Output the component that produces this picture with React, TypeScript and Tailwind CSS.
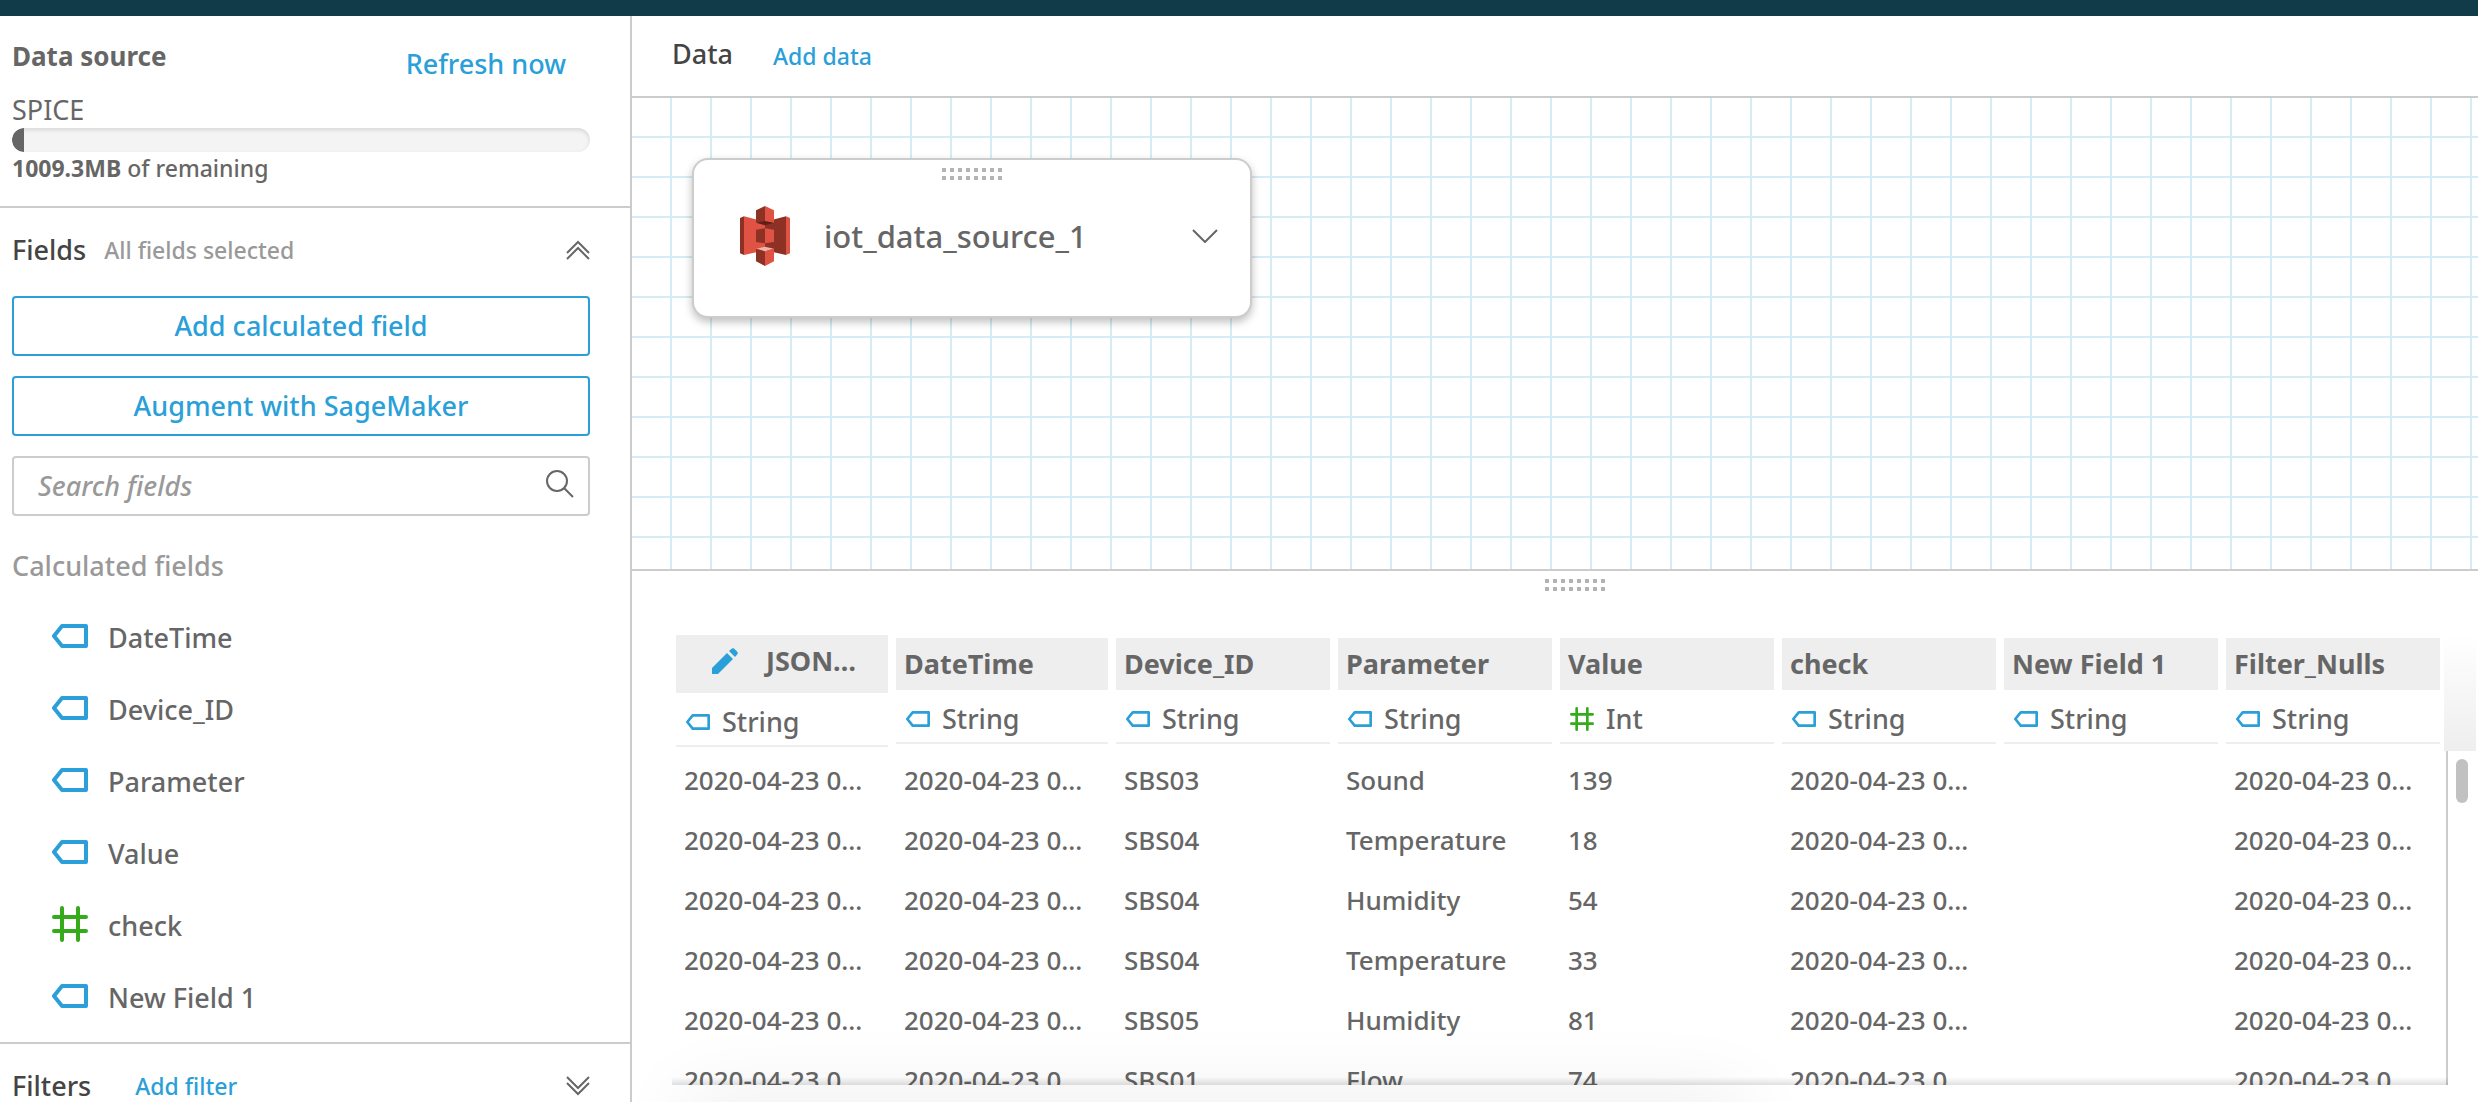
type Kind = 'String' | 'Int';

function TagIcon({ className, stroke }: { className: string; stroke: number }) {
  return (
    <svg className={className} viewBox="0 0 36 24" fill="none" stroke="#2a9fd8" strokeWidth={stroke} strokeLinejoin="round" aria-hidden="true">
      <path d="M10 2H34V22H10L2 12Z" />
    </svg>
  );
}

function HashIcon({ className }: { className: string }) {
  return (
    <svg className={className} viewBox="0 0 36 36" fill="none" stroke="#35ab1c" strokeWidth="4" strokeLinecap="round" aria-hidden="true">
      <path d="M10 2V34M26 2V34M2 11H34M2 25H34" />
    </svg>
  );
}

function DoubleChevron({ up }: { up?: boolean }) {
  return (
    <svg className="h-5 w-6" viewBox="0 0 24 20" fill="none" stroke="#666" strokeWidth="2" aria-hidden="true">
      {up ? <path d="M1 13L12 2L23 13M1 19L12 8L23 19" /> : <path d="M1 1L12 12L23 1M1 7L12 18L23 7" />}
    </svg>
  );
}

function Grip() {
  return (
    <svg className="h-3 w-[60px]" viewBox="0 0 60 12" fill="#b3b3b3" aria-hidden="true">
      {[0, 1, 2, 3, 4, 5, 6, 7].map((i) => (
        <g key={i}>
          <rect x={i * 8} y="0" width="4" height="4" />
          <rect x={i * 8} y="8" width="4" height="4" />
        </g>
      ))}
    </svg>
  );
}

function BucketIcon() {
  return (
    <svg className="h-[60px] w-[50px]" viewBox="57 54 150 180" aria-hidden="true">
      <path fill="#8c3123" d="M57 90L69 85V201L57 196Z" />
      <path fill="#e05243" d="M69 85L132 101V187L69 201Z" />
      <path fill="#8c3123" d="M195 85L132 101V187L195 201Z" />
      <path fill="#e05243" d="M195 85L207 90V196L195 201Z" />
      <path fill="#8c3123" d="M105 125L132 121V166L105 162Z" />
      <path fill="#e05243" d="M159 125L132 121V166L159 162Z" />
      <path fill="#5e1f18" d="M105 104L132 97L159 104L132 112Z" />
      <path fill="#8c3123" d="M105 67L132 54V99L105 104Z" />
      <path fill="#e05243" d="M132 54L159 67V104L132 99Z" />
      <path fill="#f2b0a9" d="M105 182L132 176L159 182L132 190Z" />
      <path fill="#8c3123" d="M105 182L132 190V234L105 220Z" />
      <path fill="#e05243" d="M159 182L132 190V234L159 220Z" />
    </svg>
  );
}

function PencilIcon() {
  return (
    <svg className="h-[26px] w-[26px]" viewBox="0 0 26 26" fill="#2a9fd8" aria-hidden="true">
      <path d="M0 26V20L15 5L21 11L6 26Z" />
      <path d="M17 3L20 0.500Q21 0 22 0.500L25.500 4Q26 5 25.500 6L23 9Z" />
    </svg>
  );
}

const fields: { name: string; kind: Kind }[] = [
  { name: 'DateTime', kind: 'String' },
  { name: 'Device_ID', kind: 'String' },
  { name: 'Parameter', kind: 'String' },
  { name: 'Value', kind: 'String' },
  { name: 'check', kind: 'Int' },
  { name: 'New Field 1', kind: 'String' },
];

const columns: { name: string; kind: Kind; editable?: boolean }[] = [
  { name: 'JSON…', kind: 'String', editable: true },
  { name: 'DateTime', kind: 'String' },
  { name: 'Device_ID', kind: 'String' },
  { name: 'Parameter', kind: 'String' },
  { name: 'Value', kind: 'Int' },
  { name: 'check', kind: 'String' },
  { name: 'New Field 1', kind: 'String' },
  { name: 'Filter_Nulls', kind: 'String' },
];

const stamp = '2020-04-23 0…';
const rows = [
  ['SBS03', 'Sound', '139'],
  ['SBS04', 'Temperature', '18'],
  ['SBS04', 'Humidity', '54'],
  ['SBS04', 'Temperature', '33'],
  ['SBS05', 'Humidity', '81'],
  ['SBS01', 'Flow', '74'],
].map(([device, parameter, value]) => [stamp, stamp, device, parameter, value, stamp, '', stamp]);

function Sidebar() {
  return (
    <aside className="flex w-[632px] shrink-0 flex-col border-r-2 border-[#ccc]">
      <section className="border-b-2 border-[#ccc] pt-6 pr-10 pb-[22px] pl-3">
        <div className="flex items-start justify-between">
          <h2 className="text-[26px] leading-8 font-bold">Data source</h2>
          <button type="button" className="mt-2 mr-6 text-[27px] leading-8 font-medium text-[#2a9fd8]">Refresh now</button>
        </div>
        <div className="mt-3 text-[27px] leading-9">SPICE</div>
        <div className="h-6 overflow-hidden rounded-full bg-[#f4f4f4] shadow-[inset_0_2px_4px_rgba(0,0,0,0.12)]">
          <div className="h-6 w-3 rounded-l-full rounded-r-sm bg-[#666]" />
        </div>
        <p className="text-[23px] leading-8 font-medium"><b>1009.3MB</b> of remaining</p>
      </section>

      <section className="border-b-2 border-[#ccc] pt-6 pr-10 pb-2 pl-3">
        <div className="flex items-center leading-9">
          <h2 className="text-[27px] font-medium text-[#444]">Fields</h2>
          <span className="ml-[18px] text-[23px] font-medium text-[#999]">All fields selected</span>
          <button type="button" aria-label="Collapse fields" className="ml-auto"><DoubleChevron up /></button>
        </div>
        <div className="mt-7 flex flex-col gap-5">
          <button type="button" className="h-[60px] rounded-sm border-2 border-[#2a9fd8] text-[27px] font-medium text-[#2a9fd8]">Add calculated field</button>
          <button type="button" className="h-[60px] rounded-sm border-2 border-[#2a9fd8] text-[27px] font-medium text-[#2a9fd8]">Augment with SageMaker</button>
          <label className="flex h-[60px] items-center rounded-sm border-2 border-[#ccc] pr-[14px] pl-6">
            <input type="search" aria-label="Search fields" placeholder="Search fields" className="min-w-0 flex-1 text-[27px] font-medium italic outline-none placeholder:text-[#999]" />
            <svg className="mb-1 h-7 w-7" viewBox="0 0 28 28" fill="none" stroke="#666" strokeWidth="2" aria-hidden="true">
              <circle cx="11" cy="11" r="10" />
              <path d="M18 18L27 27" />
            </svg>
          </label>
        </div>
        <h3 className="mt-8 text-[27px] leading-9 font-medium text-[#999]">Calculated fields</h3>
        <ul className="mt-[18px]">
          {fields.map((f) => (
            <li key={f.name} className="flex h-[72px] items-center pl-10 text-[27px] font-medium">
              {f.kind === 'Int' ? <HashIcon className="mb-1 h-9 w-9" /> : <TagIcon className="mb-1 h-6 w-9" stroke={4} />}
              <span className="ml-5">{f.name}</span>
            </li>
          ))}
        </ul>
      </section>

      <section className="flex items-center pt-6 pr-10 pl-3 leading-9">
        <h2 className="text-[27px] font-medium text-[#444]">Filters</h2>
        <button type="button" className="ml-11 text-[23px] font-medium text-[#2a9fd8]">Add filter</button>
        <button type="button" aria-label="Expand filters" className="ml-auto"><DoubleChevron /></button>
      </section>
    </aside>
  );
}

function Preview() {
  return (
    <section className="flex min-h-0 flex-1 flex-col pb-[17px] pl-10">
      <div className="flex justify-center pt-2 pb-11"><Grip /></div>
      <div className="relative flex min-h-0 flex-1 overflow-hidden pr-[2px]">
        <table className="w-full table-fixed self-start text-left">
          <colgroup>
            <col className="w-[220px]" />
            <col className="w-[220px]" />
            <col span={6} />
          </colgroup>
          <thead>
            <tr>
              {columns.map((c) => (
                <th key={c.name} scope="col" className="px-1 pb-[3px] align-middle">
                  {c.editable ? (
                    <div className="flex h-[58px] items-center bg-[#eee] pb-[6px] pl-9 text-[27px] font-bold">
                      <button type="button" aria-label="Edit column"><PencilIcon /></button>
                      <span className="ml-7">{c.name}</span>
                    </div>
                  ) : (
                    <div className="flex h-[52px] items-center bg-[#eee] px-2 text-[27px] font-bold">{c.name}</div>
                  )}
                  <div className="flex h-[54px] items-center border-b-2 border-[#eee] px-[10px] pt-[6px] text-[27px] font-medium">
                    {c.kind === 'Int' ? <HashIcon className="h-6 w-6" /> : <TagIcon className="h-4 w-6" stroke={4} />}
                    <span className="ml-3">{c.kind}</span>
                  </div>
                </th>
              ))}
            </tr>
          </thead>
          <tbody>
            {rows.map((r, i) => (
              <tr key={i} className="h-[60px]">
                {r.map((v, j) => (
                  <td key={j} className="px-3 text-[26px] font-medium whitespace-nowrap">{v}</td>
                ))}
              </tr>
            ))}
          </tbody>
        </table>
        <div className="flex w-8 shrink-0 flex-col">
          <div className="h-[116px] bg-linear-to-b from-white to-[#eee]" />
          <div className="ml-[2px] flex-1 border-l-2 border-[#ccc] pt-2 pl-2">
            <div className="h-11 w-3 rounded-full bg-[#c1c1c1]" />
          </div>
        </div>
        <div className="pointer-events-none absolute right-[30px] bottom-0 left-0 h-2 bg-linear-to-b from-transparent to-black/12" />
      </div>
    </section>
  );
}

export default function App() {
  return (
    <div className="relative flex h-screen flex-col overflow-hidden bg-white font-['Noto_Sans',sans-serif] text-[#666]">
      <header className="h-4 shrink-0 bg-[#123b4a]" />
      <div className="flex min-h-0 flex-1">
        <Sidebar />
        <main className="flex min-w-0 flex-1 flex-col">
          <div className="flex h-[82px] shrink-0 items-start border-b-2 border-[#ccc] pt-5 pl-10 leading-9">
            <h1 className="text-[27px] font-medium text-[#444]">Data</h1>
            <button type="button" className="mt-[2px] ml-10 text-[23px] font-medium text-[#2a9fd8]">Add data</button>
          </div>
          <div className="relative h-[473px] shrink-0 border-b-2 border-[#ccc] bg-[linear-gradient(to_right,transparent_38px,#d5ebf6_38px),linear-gradient(to_bottom,transparent_38px,#d5ebf6_38px)] bg-size-[40px_40px]">
            <div className="absolute top-[60px] left-[60px] flex h-40 w-[560px] flex-col rounded-2xl border-2 border-[#ccc] bg-white shadow-[0_4px_8px_rgba(0,0,0,0.25)]">
              <div className="flex justify-center pt-2"><Grip /></div>
              <div className="flex items-center pt-[26px] pr-8 pl-[46px]">
                <BucketIcon />
                <span className="ml-[34px] text-[31px] leading-10 font-medium">iot_data_source_1</span>
                <button type="button" aria-label="Data source options" className="ml-auto">
                  <svg className="h-[14px] w-[26px]" viewBox="0 0 26 14" fill="none" stroke="#666" strokeWidth="2" aria-hidden="true">
                    <path d="M1 1L13 13L25 1" />
                  </svg>
                </button>
              </div>
            </div>
          </div>
          <Preview />
        </main>
      </div>
      <div className="pointer-events-none absolute -bottom-10 left-[28%] h-8 w-[42%] rounded-full shadow-[0_0_80px_16px_rgba(0,0,0,0.07)]" />
    </div>
  );
}
